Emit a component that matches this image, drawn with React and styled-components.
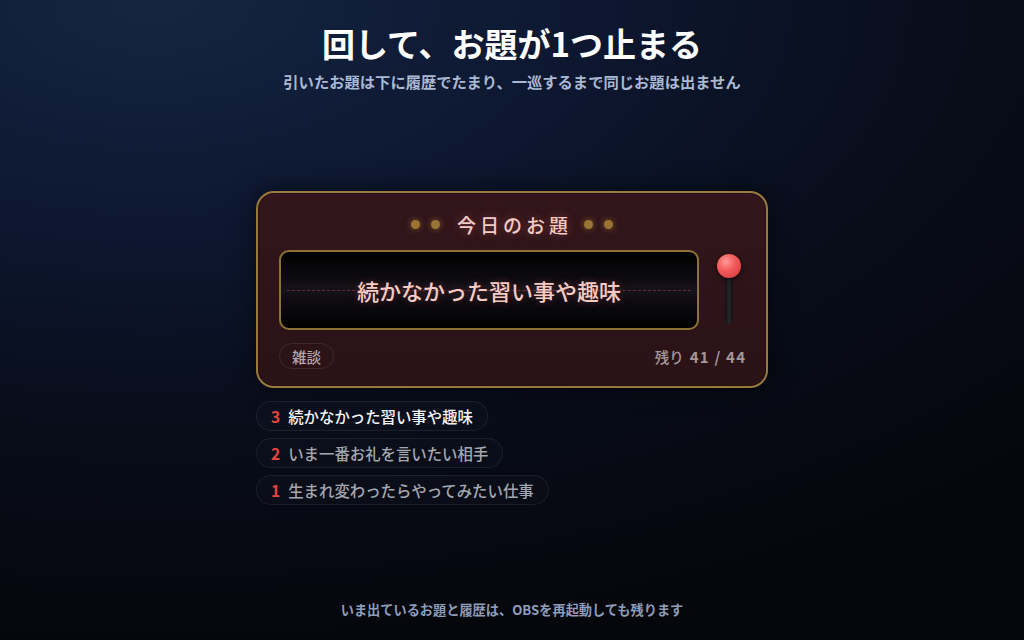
import React from "react";
import styled, { createGlobalStyle } from "styled-components";

const Global = createGlobalStyle`
  html, body { margin: 0; padding: 0; height: 100%; }
  body {
    font-family: "Noto Sans CJK JP", "Noto Sans", sans-serif;
    background: #070a13;
  }
  #root { height: 100%; }
`;

const Page = styled.div`
  width: 1024px;
  height: 640px;
  display: flex;
  flex-direction: column;
  align-items: center;
  background: radial-gradient(ellipse 120% 100% at 15% 0%, #152542 0%, #0d1730 35%, #080c18 70%, #05070d 100%);
  color: #fff;
  overflow: hidden;
`;

const Header = styled.header`
  display: flex;
  flex-direction: column;
  align-items: center;
  padding-top: 19px;
`;

const Title = styled.h1`
  margin: 0;
  font-size: 33px;
  line-height: 48px;
  font-weight: 700;
  color: #ffffff;
`;

const Subtitle = styled.p`
  margin: 0;
  margin-top: 3px;
  font-size: 15.3px;
  line-height: 22px;
  font-weight: 700;
  color: #a9b8d3;
`;

const Main = styled.main`
  flex: 1;
  display: flex;
  flex-direction: column;
  justify-content: center;
  width: 512px;
  gap: 13px;
  padding-top: 4px;
`;

const Card = styled.section`
  box-sizing: border-box;
  width: 512px;
  border: 2px solid #9a7a3b;
  border-radius: 18px;
  background: linear-gradient(180deg, #32161b 0%, #2a1216 100%);
  box-shadow: 0 0 24px rgba(0, 0, 0, 0.55), inset 0 0 0 1px rgba(0,0,0,0.25);
  padding: 16px 21px 17px 21px;
  display: flex;
  flex-direction: column;
`;

const CardHead = styled.div`
  display: flex;
  align-items: center;
  justify-content: center;
  gap: 11px;
  height: 30px;
`;

const Dot = styled.span`
  width: 9px;
  height: 9px;
  border-radius: 50%;
  background: #9a7433;
  box-shadow: 0 0 6px rgba(200, 150, 60, 0.55);
`;

const HeadTitle = styled.span`
  font-size: 19px;
  font-weight: 500;
  letter-spacing: 4px;
  color: #f3cbc6;
  margin: 0 1px 0 6px;
  text-shadow: 0 0 10px rgba(255, 120, 120, 0.35);
`;

const ReelRow = styled.div`
  margin-top: 11px;
  display: flex;
  align-items: stretch;
  gap: 18px;
`;

const Reel = styled.div`
  position: relative;
  flex: 1;
  height: 80px;
  box-sizing: border-box;
  border: 2px solid #8d7236;
  border-radius: 10px;
  background: linear-gradient(180deg, #000000 0%, #0d0b10 35%, #16131a 50%, #0d0b10 65%, #000000 100%);
  display: flex;
  align-items: center;
  justify-content: center;
  overflow: hidden;
`;

const CenterLine = styled.div`
  position: absolute;
  left: 6px;
  right: 6px;
  top: 50%;
  border-top: 1px dashed rgba(190, 70, 80, 0.45);
`;

const ReelText = styled.span`
  position: relative;
  font-size: 22px;
  font-weight: 500;
  color: #f6cbc4;
  margin-top: 0;
  text-shadow: 0 0 8px rgba(255, 110, 110, 0.25);
`;

const Lever = styled.div`
  position: relative;
  width: 24px;
  margin-right: 4px;
  display: flex;
  flex-direction: column;
  align-items: center;
  padding-top: 4px;
`;

const Knob = styled.div`
  position: relative;
  z-index: 1;
  width: 24px;
  height: 24px;
  border-radius: 50%;
  background: radial-gradient(circle at 38% 32%, #ff9a96 0%, #f25c5c 40%, #cf3437 100%);
  box-shadow: 0 2px 6px rgba(0, 0, 0, 0.5);
`;

const Stick = styled.div`
  width: 8px;
  height: 52px;
  margin-top: -6px;
  border-radius: 4px;
  background: linear-gradient(90deg, #111114 0%, #26262b 50%, #111114 100%);
`;

const Foot = styled.div`
  margin-top: 13px;
  display: flex;
  align-items: center;
  justify-content: space-between;
`;

const Tag = styled.span`
  box-sizing: border-box;
  height: 26px;
  padding: 0 12px;
  display: inline-flex;
  align-items: center;
  border-radius: 13px;
  border: 1px solid rgba(255, 255, 255, 0.09);
  font-size: 14.5px;
  font-weight: 500;
  color: #b7a6a6;
`;

const Remain = styled.span`
  white-space: nowrap;
  flex-shrink: 0;
  font-size: 14.5px;
  font-weight: 500;
  color: #a2989a;
  b {
    font-size: 15px;
    font-weight: 700;
    letter-spacing: 1.2px;
    margin-left: 6px;
    margin-right: -1.2px;
  }
`;

const History = styled.ul`
  list-style: none;
  margin: 0;
  padding: 0;
  display: flex;
  flex-direction: column;
  align-items: flex-start;
  gap: 7px;
`;

const HistoryItem = styled.li`
  box-sizing: border-box;
  height: 30px;
  padding: 0 14px 0 13px;
  display: inline-flex;
  align-items: center;
  gap: 8px;
  border-radius: 15px;
  border: 1px solid rgba(255, 255, 255, 0.07);
  background: rgba(255, 255, 255, 0.015);
  font-size: 15.4px;
  font-weight: 500;
  white-space: nowrap;
  color: ${(p) => (p.$latest ? "#f4f4f6" : "#a3a7b2")};
`;

const Num = styled.span`
  font-weight: 700;
  font-size: 15.6px;
  color: #e5443f;
  margin-left: 1px;
`;

const Footer = styled.footer`
  height: 40px;
  font-size: 13.2px;
  font-weight: 700;
  color: #8e9dba;
  display: flex;
  align-items: flex-start;
  box-sizing: border-box;
`;

const history = [
  { n: 3, text: "続かなかった習い事や趣味" },
  { n: 2, text: "いま一番お礼を言いたい相手" },
  { n: 1, text: "生まれ変わったらやってみたい仕事" },
];

export default function App() {
  return (
    <>
      <Global />
      <Page>
        <Header>
          <Title>回して、お題が1つ止まる</Title>
          <Subtitle>引いたお題は下に履歴でたまり、一巡するまで同じお題は出ません</Subtitle>
        </Header>
        <Main>
          <Card>
            <CardHead>
              <Dot />
              <Dot />
              <HeadTitle>今日のお題</HeadTitle>
              <Dot />
              <Dot />
            </CardHead>
            <ReelRow>
              <Reel>
                <CenterLine />
                <ReelText>続かなかった習い事や趣味</ReelText>
              </Reel>
              <Lever>
                <Knob />
                <Stick />
              </Lever>
            </ReelRow>
            <Foot>
              <Tag>雑談</Tag>
              <Remain>
                残り<b>41 / 44</b>
              </Remain>
            </Foot>
          </Card>
          <History>
            {history.map((h, i) => (
              <HistoryItem key={h.n} $latest={i === 0}>
                <Num>{h.n}</Num>
                {h.text}
              </HistoryItem>
            ))}
          </History>
        </Main>
        <Footer>いま出ているお題と履歴は、OBSを再起動しても残ります</Footer>
      </Page>
    </>
  );
}
